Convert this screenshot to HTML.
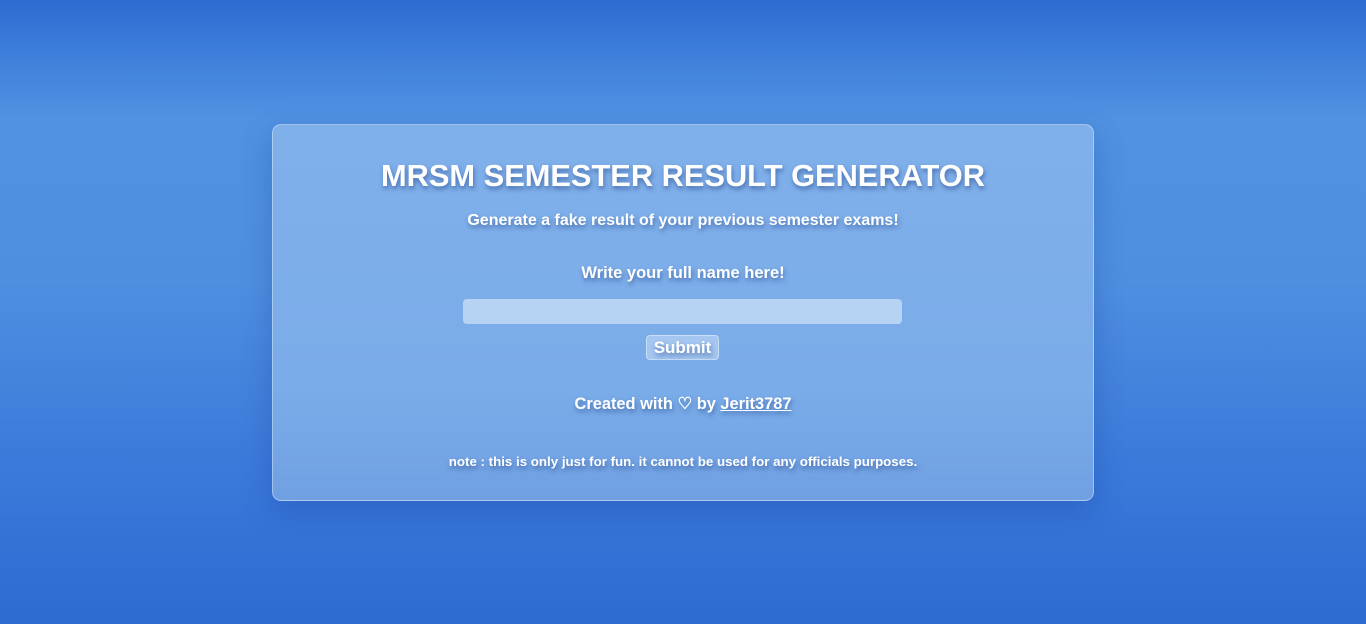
<!DOCTYPE html>
<html><head><meta charset="utf-8"><style>
html,body{margin:0;height:624px;overflow:hidden}
body{background:linear-gradient(180deg,#2e6bd2 0%,#3f7fdb 9%,#5192e2 19%,#4f8fe0 45%,#3b79da 75%,#2d6bd2 100%);font-family:"Liberation Sans",sans-serif;color:#fff;font-weight:bold}
.card{position:absolute;left:272px;top:124px;width:820px;height:375px;border:1px solid rgba(255,255,255,.35);border-radius:9px;background:linear-gradient(180deg,#80b0ea 0%,#7aace9 70%,#70a0e2 100%);box-shadow:0 10px 30px rgba(20,60,150,.3);text-align:center}
.ts{text-shadow:1px 3px 5px rgba(30,60,130,.55)}
h1{position:absolute;left:0;right:0;top:156px;margin:0;font-size:30.8px;letter-spacing:0;line-height:40px}
.p{position:absolute;left:0;right:0;font-size:16px;line-height:20px}
.inp{position:absolute;left:463px;top:299px;width:439px;height:25px;border-radius:4px;background:#b6d3f3}
.btn{position:absolute;left:646px;top:335px;width:73px;height:25px;border-radius:4px;background:#a4c6f1;border:1px solid rgba(255,255,255,.4);box-sizing:border-box;font-size:17px;line-height:24px;text-align:center}
a{color:#fff;text-decoration:underline}
</style></head><body>
<div class="card"></div>
<h1 class="ts" style="text-align:center">MRSM SEMESTER RESULT GENERATOR</h1>
<div class="p ts" style="top:211px;text-align:center">Generate a fake result of your previous semester exams!</div>
<div class="p ts" style="top:263px;font-size:16.5px;text-align:center">Write your full name here!</div>
<div class="inp"></div>
<div class="btn ts">Submit</div>
<div class="p ts" style="top:394px;font-size:16.4px;text-align:center">Created with ♡ by <a>Jerit3787</a></div>
<div class="p ts" style="top:452px;font-size:13.3px;text-align:center">note : this is only just for fun. it cannot be used for any officials purposes.</div>
</body></html>
